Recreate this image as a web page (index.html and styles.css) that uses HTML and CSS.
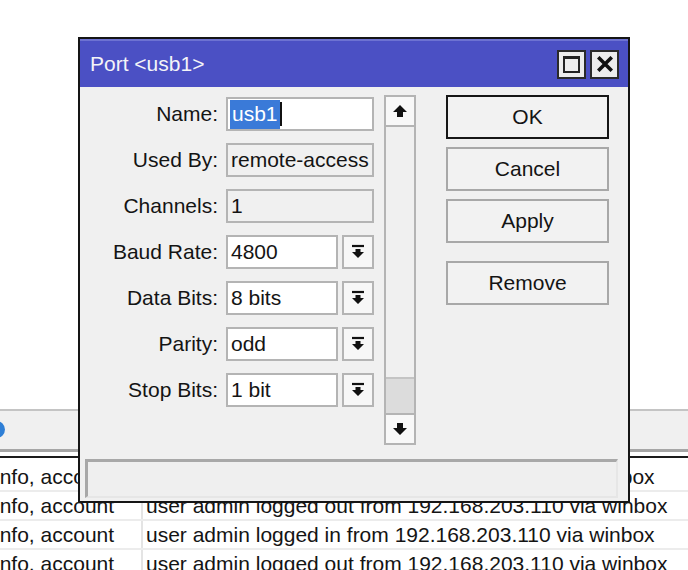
FILE: index.html
```html
<!DOCTYPE html>
<html>
<head>
<meta charset="utf-8">
<title>Port usb1</title>
<link rel="stylesheet" href="styles.css">
</head>
<body>
<div class="desk">
  <div class="spacer"></div>
  <div class="toolbar"><span class="tool-icon"></span></div>
  <div class="rule"></div>
  <div class="log">
    <div class="row"><div class="c1"><span>info, account</span></div><div class="c2">user admin logged in from 192.168.203.110 via winbox</div></div>
    <div class="row"><div class="c1"><span>info, account</span></div><div class="c2">user admin logged out from 192.168.203.110 via winbox</div></div>
    <div class="row"><div class="c1"><span>info, account</span></div><div class="c2">user admin logged in from 192.168.203.110 via winbox</div></div>
    <div class="row"><div class="c1"><span>info, account</span></div><div class="c2">user admin logged out from 192.168.203.110 via winbox</div></div>
  </div>
</div>

<div class="dialog">
  <div class="titlebar">
    <span class="title">Port &lt;usb1&gt;</span>
    <div class="tb-btns">
      <div class="tb-btn"><span class="max-icon"></span></div>
      <div class="tb-btn">
        <svg width="16" height="16" viewBox="0 0 16 16"><path d="M2.5 2.5 L13.5 13.5 M13.5 2.5 L2.5 13.5" stroke="#111" stroke-width="3.6" stroke-linecap="square"/></svg>
      </div>
    </div>
  </div>
  <div class="body">
    <div class="form">
      <label class="lbl">Name:</label>
      <div class="field white"><span class="sel">usb1</span><span class="caret"></span></div>

      <label class="lbl">Used By:</label>
      <div class="field grey">remote-access</div>

      <label class="lbl">Channels:</label>
      <div class="field grey">1</div>

      <label class="lbl">Baud Rate:</label>
      <div class="combo"><div class="field white">4800</div><div class="dd"><svg width="16" height="16" viewBox="0 0 16 16"><path d="M2 2 H14" stroke="#111" stroke-width="2.2"/><path d="M5.5 5 H10.5 V8 H14 L8 14 L2 8 H5.5 Z" fill="#111"/></svg></div></div>

      <label class="lbl">Data Bits:</label>
      <div class="combo"><div class="field white">8 bits</div><div class="dd"><svg width="16" height="16" viewBox="0 0 16 16"><path d="M2 2 H14" stroke="#111" stroke-width="2.2"/><path d="M5.5 5 H10.5 V8 H14 L8 14 L2 8 H5.5 Z" fill="#111"/></svg></div></div>

      <label class="lbl">Parity:</label>
      <div class="combo"><div class="field white">odd</div><div class="dd"><svg width="16" height="16" viewBox="0 0 16 16"><path d="M2 2 H14" stroke="#111" stroke-width="2.2"/><path d="M5.5 5 H10.5 V8 H14 L8 14 L2 8 H5.5 Z" fill="#111"/></svg></div></div>

      <label class="lbl">Stop Bits:</label>
      <div class="combo"><div class="field white">1 bit</div><div class="dd"><svg width="16" height="16" viewBox="0 0 16 16"><path d="M2 2 H14" stroke="#111" stroke-width="2.2"/><path d="M5.5 5 H10.5 V8 H14 L8 14 L2 8 H5.5 Z" fill="#111"/></svg></div></div>
    </div>

    <div class="scroll">
      <div class="sbtn"><svg width="16" height="14" viewBox="0 0 16 14"><path d="M8 1 L15 8 H11 V13 H5 V8 H1 Z" fill="#111"/></svg></div>
      <div class="track"></div>
      <div class="thumb"></div>
      <div class="sbtn"><svg width="16" height="14" viewBox="0 0 16 14"><path d="M8 13 L15 6 H11 V1 H5 V6 H1 Z" fill="#111"/></svg></div>
    </div>

    <div class="actions">
      <div class="btn default">OK</div>
      <div class="btn">Cancel</div>
      <div class="btn">Apply</div>
      <div class="btn remove">Remove</div>
    </div>
  </div>
  <div class="status"></div>
</div>
</body>
</html>
```
FILE: styles.css
```css
html, body {
  margin: 0;
  padding: 0;
}
body {
  width: 688px;
  height: 570px;
  overflow: hidden;
  position: relative;
  background: #ffffff;
  font-family: "Liberation Sans", Arial, sans-serif;
  font-size: 21px;
  color: #141414;
}

/* background window */
.desk {
  display: flex;
  flex-direction: column;
}
.spacer { height: 409px; }
.toolbar {
  height: 38px;
  background: #f0f0f0;
  border-top: 2px solid #c4c4c4;
  border-bottom: 3px solid #a6a6a6;
  position: relative;
  overflow: hidden;
}
.tool-icon {
  position: absolute;
  left: -12px;
  top: 10px;
  width: 17px;
  height: 17px;
  border-radius: 50%;
  background: #2f7fd6;
}
.rule {
  height: 2px;
  margin-top: 4px;
  background: #1c1c1c;
}
.log {
  margin-top: 5px;
}
.row {
  display: flex;
  height: 27px;
  border-bottom: 2px solid #ececec;
  align-items: center;
  white-space: nowrap;
}
.c1 {
  width: 141px;
  height: 100%;
  border-right: 2px solid #e4e4e4;
  overflow: hidden;
  display: flex;
  align-items: center;
}
.c1 span { margin-left: -5px; }
.c2 {
  padding-left: 3px;
}

/* dialog window */
.dialog {
  position: absolute;
  left: 78px;
  top: 37px;
  width: 552px;
  height: 466px;
  box-sizing: border-box;
  border: 2px solid #151515;
  background: #f0f0f0;
  display: flex;
  flex-direction: column;
}
.titlebar {
  height: 48px;
  background: #4b50c4;
  border-top: 2px solid #6d72d2;
  box-sizing: border-box;
  display: flex;
  align-items: center;
  justify-content: space-between;
  padding: 0 9px 0 10px;
}
.title {
  color: #f4f4f8;
}
.tb-btns {
  display: flex;
  gap: 4px;
}
.tb-btn {
  width: 29px;
  height: 29px;
  box-sizing: border-box;
  background: #ececec;
  border: 2px solid #2a2a2a;
  display: flex;
  align-items: center;
  justify-content: center;
}
.max-icon {
  width: 17px;
  height: 17px;
  box-sizing: border-box;
  border: 2px solid #222;
  border-top-width: 3px;
}

.body {
  flex: 1;
  display: flex;
  padding: 8px 0 0 0;
}
.form {
  margin-top: 2px;
  display: grid;
  grid-template-columns: 138px 148px;
  grid-auto-rows: 34px;
  column-gap: 8px;
  row-gap: 12px;
  align-content: start;
}
.lbl {
  text-align: right;
  align-self: center;
  line-height: 34px;
  white-space: nowrap;
}
.field {
  box-sizing: border-box;
  height: 34px;
  border: 2px solid #b4b4b4;
  padding: 0 0 0 3px;
  display: flex;
  align-items: center;
  white-space: nowrap;
  overflow: hidden;
}
.field.white { background: #ffffff; }
.field.grey { background: #f0f0f0; }
.sel {
  background: #3a7ad8;
  color: #ffffff;
  padding: 2px 2px 3px 2px;
  margin-left: -1px;
}
.caret {
  width: 2px;
  height: 24px;
  background: #111;
}
.combo {
  display: flex;
  gap: 4px;
}
.combo .field { width: 112px; }
.dd {
  width: 32px;
  height: 34px;
  box-sizing: border-box;
  border: 2px solid #b4b4b4;
  background: #f7f7f7;
  display: flex;
  align-items: center;
  justify-content: center;
}

.scroll {
  margin-left: 10px;
  width: 32px;
  height: 350px;
  box-sizing: border-box;
  border: 2px solid #b4b4b4;
  background: #f0f0f0;
  display: flex;
  flex-direction: column;
}
.sbtn {
  height: 28px;
  background: #f8f8f8;
  display: flex;
  align-items: center;
  justify-content: center;
}
.sbtn:first-child { border-bottom: 2px solid #b4b4b4; }
.sbtn:last-child { border-top: 2px solid #b4b4b4; }
.track { flex: 1; }
.thumb {
  height: 34px;
  background: #dcdcdc;
  border-top: 2px solid #c4c4c4;
}

.actions {
  margin-left: 30px;
  width: 163px;
  display: flex;
  flex-direction: column;
  gap: 8px;
}
.btn {
  height: 44px;
  box-sizing: border-box;
  border: 2px solid #a8a8a8;
  background: #f2f2f2;
  display: flex;
  align-items: center;
  justify-content: center;
}
.btn.default { border-color: #161616; }
.btn.remove { margin-top: 10px; }

.status {
  height: 39px;
  margin: 0 10px 3px 5px;
  box-sizing: border-box;
  border-top: 3px solid #a8a8a8;
  border-left: 3px solid #a8a8a8;
  border-right: 2px solid #e6e6e6;
  border-bottom: 2px solid #e6e6e6;
  background: #efefef;
}
```
